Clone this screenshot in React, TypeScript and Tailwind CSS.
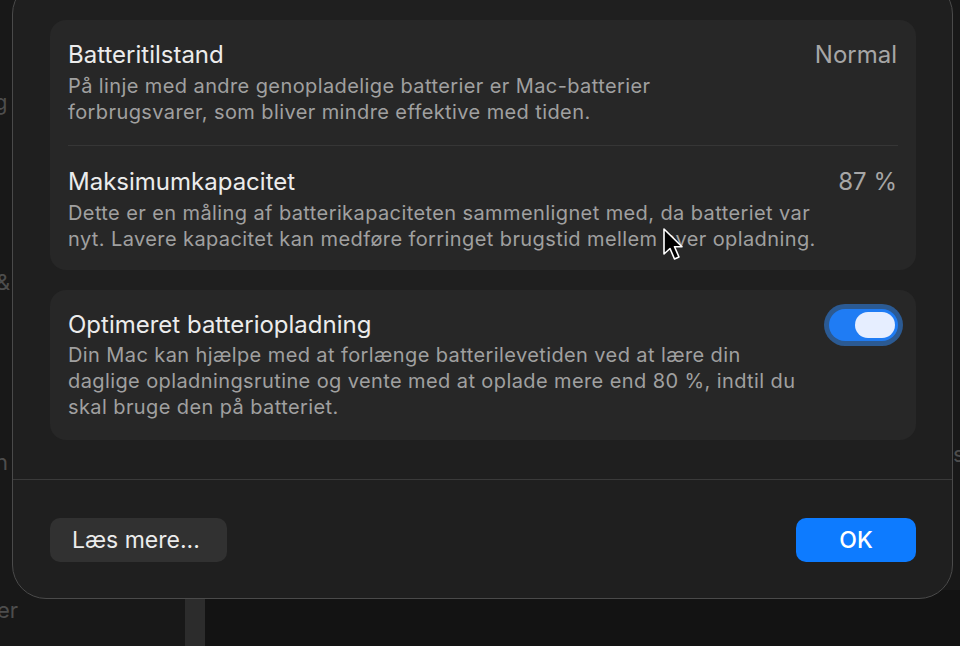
import React from "react";

const font = "font-['Inter','Noto_Sans',sans-serif]";

function Toggle() {
  return (
    <div className="w-[69px] h-[32px] rounded-full bg-[#1f7cf4] shadow-[0_0_0_5px_#2b5a93] flex items-center justify-end pr-[3px] shrink-0">
      <div className="w-[40px] h-[26px] rounded-full bg-[#e6eeff]" />
    </div>
  );
}

function Cursor() {
  return (
    <svg className="absolute left-[662px] top-[227px]" width="24" height="36" viewBox="0 0 24 36">
      <path
        d="M2 2 L2 27 L8 21.5 L12.5 32 L17 30 L12.5 19.8 L20 19.8 Z"
        fill="#000"
        stroke="#fff"
        strokeWidth="1.6"
        strokeLinejoin="round"
      />
    </svg>
  );
}

export default function App() {
  const title = "text-[24px] leading-[28px] text-[#ececec]";
  const desc = "text-[20px] tracking-[0.02em] leading-[26px] text-[#a0a0a0]";
  const value = "text-[24px] leading-[28px] text-[#a6a6a6] pr-[1px]";

  return (
    <div className={`relative w-[960px] h-[646px] overflow-hidden bg-[#181818] ${font}`}>
      {/* window behind the sheet */}
      <div className="absolute inset-0 text-[22px] text-[#4d4d4d]">
        <span className="absolute left-[-6px] top-[86px]">g</span>
        <span className="absolute left-[-4px] top-[266px]">&amp;</span>
        <span className="absolute left-[-5px] top-[446px]">h</span>
        <span className="absolute left-[-3px] top-[594px]">er</span>
        <span className="absolute left-[953px] top-[438px]">s</span>
        <div className="absolute left-[185px] top-[590px] w-[20px] h-[60px] bg-[#2c2c2c]" />
        <div className="absolute left-[205px] top-[590px] w-[760px] h-[60px] bg-[#131313]" />
      </div>

      <div className="relative ml-[12px] mt-[-20px] w-[941px] h-[619px] rounded-[34px] border border-[#4a4a4a] bg-[#1f1f1f] flex flex-col">
        <div className="pl-[37px] pr-[36px] pt-[39px] flex flex-col gap-[20px]">
          <div className="rounded-[16px] bg-[#272727] px-[18px] pt-[21px] pb-[18px]">
            <div className="flex justify-between">
              <div>
                <div className={title}>Batteritilstand</div>
                <div className={`mt-[4px] ${desc}`}>
                  På linje med andre genopladelige batterier er Mac-batterier
                  <br />
                  forbrugsvarer, som bliver mindre effektive med tiden.
                </div>
              </div>
              <div className={value}>Normal</div>
            </div>
            <div className="h-px bg-[#363636] mt-[20px] mb-[22px]" />
            <div className="flex justify-between">
              <div>
                <div className={title}>Maksimumkapacitet</div>
                <div className={`mt-[4px] ${desc}`}>
                  Dette er en måling af batterikapaciteten sammenlignet med, da batteriet var
                  <br />
                  nyt. Lavere kapacitet kan medføre forringet brugstid mellem hver opladning.
                </div>
              </div>
              <div className={value}>87 %</div>
            </div>
          </div>

          <div className="rounded-[16px] bg-[#272727] px-[18px] pt-[21px] pb-[20px] flex justify-between">
            <div>
              <div className={title}>Optimeret batteriopladning</div>
              <div className={`mt-[3px] ${desc}`}>
                Din Mac kan hjælpe med at forlænge batterilevetiden ved at lære din
                <br />
                daglige opladningsrutine og vente med at oplade mere end 80 %, indtil du
                <br />
                skal bruge den på batteriet.
              </div>
            </div>
            <div className="mt-[-2px]">
              <Toggle />
            </div>
          </div>
        </div>

        <div className="mt-[39px] border-t border-[#3a3a3a] pl-[37px] pr-[36px] pt-[38px] flex justify-between">
          <button className="h-[44px] w-[177px] rounded-[10px] bg-[#313131] text-[23px] text-[#ececec] text-left pl-[22px]">
            Læs mere...
          </button>
          <button className="h-[44px] w-[120px] rounded-[10px] bg-[#0d7bff] text-[23px] font-medium text-white">
            OK
          </button>
        </div>
      </div>

      <Cursor />
    </div>
  );
}
